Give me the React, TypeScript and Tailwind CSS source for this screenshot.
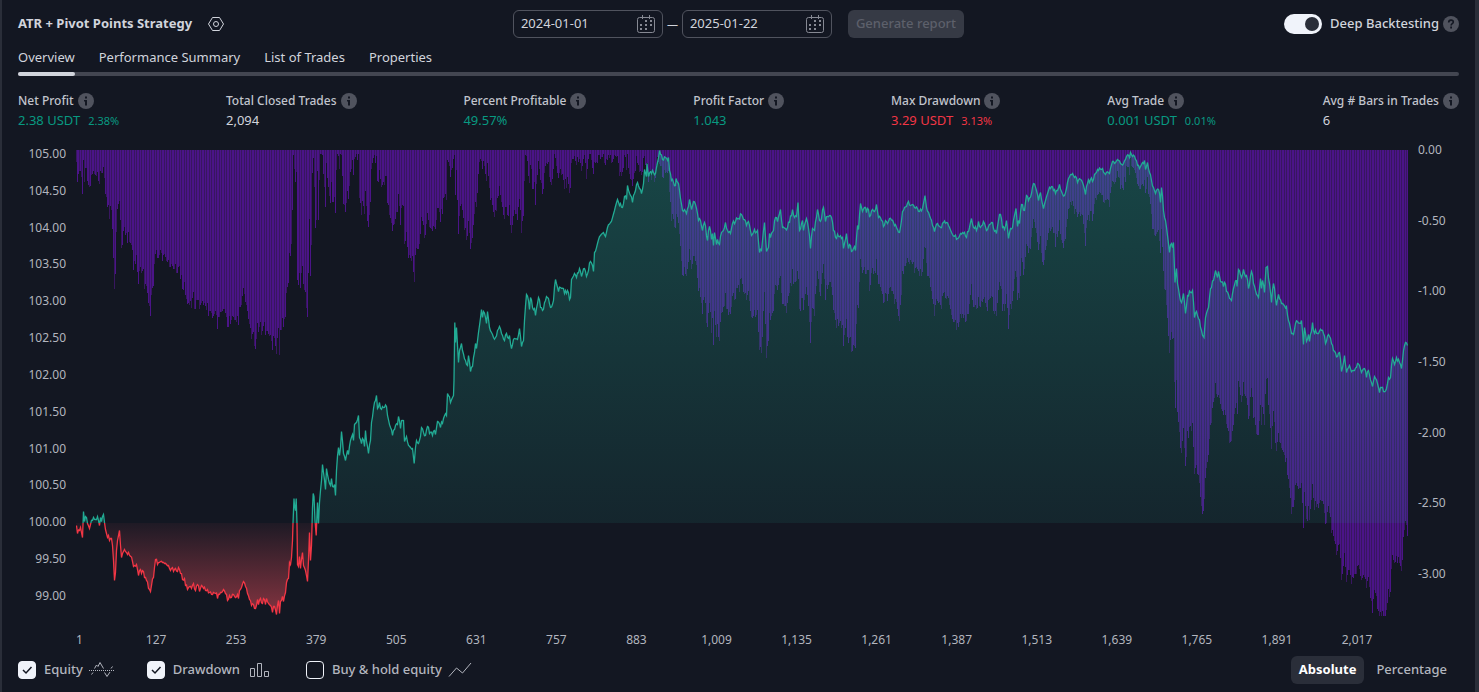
import {useState} from "react";
import type {ReactNode} from "react";

const PLOT = {x: 76, y: 150, w: 1332, h: 466};
const BASELINE = 523;

// equity curve, x,y in plot units
const EQUITY = `
76,525 77,533 79,530 80,527 81,532 82,537 83,511 84,521 85,516 86,517 87,523 89,528 90,524 92,520 93,517 95,519
97,516 98,520 99,525 100,517 101,521 102,516 103,514 104,522 106,533 107,537 108,535 109,540 110,538 111,538
112,545 113,560 114,580 115,572 116,550 117,540 119,530 120,545 121,557 122,553 123,551 124,549 126,552 127,554
128,552 130,556 132,561 133,566 134,565 136,564 137,569 138,575 140,569 141,573 143,571 144,577 146,580 148,588
150,591 151,585 153,577 154,567 155,559 157,564 158,562 160,561 162,562 164,563 166,564 168,565 170,570 171,568
173,571 175,568 177,571 179,569 181,573 182,579 184,578 185,585 187,589 189,586 191,588 193,583 195,590 197,584
199,591 201,585 203,588 205,590 207,589 209,592 211,594 213,592 215,593 217,598 219,594 221,592 223,589 225,593
227,600 229,595 231,597 233,594 235,597 237,594 238,598 239,590 241,587 243,581 245,586 247,593 249,599 251,605
253,604 255,608 257,599 258,604 260,598 262,603 264,599 265,604 266,598 268,603 270,605 272,612 273,606 274,606
276,614 278,600 279,613 280,601 282,596 283,601 285,592 286,582 288,578 289,562 290,564 291,557 292,540 292.5,523
293.5,498 294,505 295,510 295.7,498 296.5,523 297,564 298,566 299,556 300,568 302,552 303,565 305,570 306,575
307,581 308,560 309,532 310,560 311,545 312,507 312.7,493 313.5,496 314.5,520 315.7,535 317,502 318,523 319,502
320,490 321,480 322,464 323,472 325,489 326,468 328,479 330,485 331,478 332,486 334,484 335,495 336,470 338,447
339,455 340,447 341,431 343,453 345,460 347,450 348,454 350,440 352,434 353,440 354,424 356,422 358,415 359,437
361,443 362,438 364,446 365,430 366,441 367,446 368,453 370,440 371,422 373,408 374,402 376,395 377,408 379,402
380,408 382,406 384,407 386,406 387,415 390,427 392,435 395,425 397,424 398,416 400,428 401,420 403,420 404,441
406,436 408,445 410,447 412,448 413.7,463 415,447 416,440 418,443 420,436 421,427 423,432 425,435 427,426 429,433
432,435 434,430 435,434 437,421 440,427 443,418 446,415 447,393 450,402 452,397 453,395 453.5,380 454.3,322
455,342 456,327 457,345 458,362 459,350 461,343 462,350 465,360 467,365 468,355 470,371 472,366 474,352 475,343
476,348 478,332 479,325 481,309 482,317 483,311 486,323 487,311 489,327 491,332 493,337 495,337 497,330 499,326
501,333 504,340 506,333 507,337 509,335 511,348 514,338 517,339 519,328 521,346 523,340 524,320 526,294 528,300
529,309 530,297 532,307 534,308 535,315 538,297 540,307 542,310 545,300 546,296 548,298 550,307 553,300 555,279
558,291 560,287 563,288 564,293 567,290 569,299 570,297 571,279 574,273 576,277 579,268 581,276 584,268 586,276
588,270 590,261 592,265 593,271 594,252 597,243 600,235 603,232 605,236 607,227 610,222 614,210 617,199 619,205
620,203 622,207 624,196 626,199 627,185 630,195 632,202 635,190 637,182 639,188 641,193 643,183 644,169 646,176
646.5,163 648,176 650,171 653,172 655,173 657,162 659,150 662,159 665,157 667,160 668,157 669,170 671,180 675,185
675.5,178 678,183 680,198 682,210 684,209 686,213 688,206 689,199 691,209 693,201 696,208 698,220 700,220 702,230
704,222 707,240 709,226 711,239 712,233 713,245 714,232 716,244 717,239 719,244 721,232 723,230 725,222 727,230
730,233 732,223 735,221 738,218 741,214 744,219 746,225 748,221 751,235 753,232 757,230 759,252 761,250 762,240
764,222 766,251 768,247 769,233 770,237 773,230 775,217 777,221 780,209 782,227 785,228 787,227 789,222 792,209
794,217 796,216 797.5,202 799,230 802,220 803,230 806,218 808,228 810,248 812,228 814,230 817,209 819,220 821,218
823,207 825,221 827,216 831,217 833,230 835,237 838,236 842,237 843,248 846,233 848,248 850,245 851,251 854,246
855,250 857,225 858,229 860,203 862,211 865,207 866,212 868,209 869,216 872,209 874,211 876,204 878,217 881,220
883,226 885,220 887,223 889,218 893,222 896,227 899,232 901,220 902,211 904,207 906,206 908,201 910,205 912,204
914,207 918,211 922,208 924.5,195 926,207 929,215 932,225 934,231 937,223 940,227 943,222 946,222 948,225 952,234
957,238 960,233 963,233 966,237 969,227 971,218 973,227 976,230 978,221 980,227 983,221 986,230 988,226 991,222
993,228 996,233 998,220 1000,214 1002,227 1004,229 1006,220 1008,238 1010,228 1012,227 1014,215 1015.5,208
1017,226 1018,220 1019,223 1021,204 1024,210 1026,195 1028,200 1031,193 1033,183 1036,190 1038,200 1040,192
1043,208 1045,200 1048,190 1051,186 1053,190 1055,193 1059,184 1061,191 1064,195 1066,188 1068,178 1070,174
1072,173 1074,177 1077,182 1080,179 1082,182 1085,194 1087,183 1090,179 1092,181 1095,173 1098,170 1102,168
1105,174 1109,173 1113,161 1115,162 1117,159 1120,163 1123,163 1125,159 1126,156 1129,157 1130,152 1132,156
1135,159 1137,165 1139,168 1142,162 1144,160 1145,169 1147,162 1149,172 1151,180 1153,187 1155,193 1158,189
1160,202 1161,187 1163,210 1165,220 1167,235 1169,252 1171,243 1172,247 1173,242 1174.5,282 1176,268 1177,283
1179,295 1181,302 1183,293 1185,313 1187,295 1190,292 1192,290 1194,317 1196,311 1198,318 1201,330 1203.5,337
1205,317 1208,307 1210,288 1213,280 1215,270 1217,277 1218,271 1220,281 1223,286 1224,282 1226,291 1228,294
1231,300 1233,288 1236,280 1236.5,286 1238,269 1241,277 1243,269 1245,276 1246,275 1248,288 1251,271 1253,283
1255,290 1258,297 1260,278 1261,288 1262,280 1264,292 1265.5,267 1267,266 1268,278 1269,283 1271,302 1273,283
1276,305 1278,294 1281,303 1286,306 1288,320 1291,333 1293,334 1295,323 1297,321 1300,323 1301,320 1303,344
1304,327 1306,341 1308,334 1309,341 1311,331 1312,322 1313,330 1317,333 1321,330 1323,333 1325,343 1328,334
1331,343 1333,350 1337,356 1339,352 1341,371 1344,355 1346,372 1348,367 1352,370 1354,370 1357,363 1359,365
1361,372 1364,368 1366,377 1368,370 1372,386 1374,376 1377,383 1379,392 1381,387 1383,391 1386,388 1388,377
1390,377 1392,358 1394,364 1396,357 1399,362 1401,368 1403,350 1405,342 1407,345
`.trim().split(/\s+/).map((p) => p.split(",").map(Number));

const noise = (n: number) => Math.abs(Math.sin(n * 12.9898) * 43758.5453) % 1;

function buildLine() {
    const out: string[] = [];
    EQUITY.forEach(([x, y], i) => {
        out.push(`${x + 0.5} ${y + 0.5}`);
        const next = EQUITY[i + 1];
        if (!next) return;
        for (let mx = x + 1; mx <= next[0] - 1; mx++) {
            const my = y + (next[1] - y) * (mx - x) / (next[0] - x) + (noise(mx) - 0.5) * 5;
            out.push(`${mx + 0.5} ${my.toFixed(1)}`);
        }
    });
    return "M" + out.join("L");
}

const linePath = buildLine();
const areaPath = `${linePath}V${BASELINE}H${PLOT.x}Z`;

// one drawdown column per unit, measured down from the highest equity so far
function buildDrawdown() {
    let peak = 521;
    let i = 0;
    let solid = "";
    let faint = "";
    for (let x = PLOT.x; x < PLOT.x + PLOT.w; x++) {
        while (i < EQUITY.length - 2 && EQUITY[i + 1][0] <= x) {
            peak = Math.min(peak, EQUITY[i + 1][1]);
            i++;
        }
        const [x0, y0] = EQUITY[i];
        const [x1, y1] = EQUITY[i + 1];
        const t = Math.min(1, (x - x0) / (x1 - x0));
        const y = y0 + (y1 - y0) * t;
        const n = noise(x);
        const depth = Math.max(0, y - peak) * 1.91 + 4 + n * n * 11;
        const bar = `M${x} ${PLOT.y}h1V${Math.round(PLOT.y + Math.min(depth, PLOT.h))}h-1Z`;
        if (x % 5 === 1 || x % 5 === 4) {
            faint += bar;
        } else {
            solid += bar;
        }
    }
    return {solid, faint};
}

const drawdown = buildDrawdown();

const tabs = ["Overview", "Performance Summary", "List of Trades", "Properties"];

const metrics = [
    {label: "Net Profit", value: "2.38 USDT", percent: "2.38%", color: "text-[#089981]"},
    {label: "Total Closed Trades", value: "2,094", color: "text-[#d1d4dc]"},
    {label: "Percent Profitable", value: "49.57%", color: "text-[#089981]"},
    {label: "Profit Factor", value: "1.043", color: "text-[#089981]"},
    {label: "Max Drawdown", value: "3.29 USDT", percent: "3.13%", color: "text-[#f23645]"},
    {label: "Avg Trade", value: "0.001 USDT", percent: "0.01%", color: "text-[#089981]"},
    {label: "Avg # Bars in Trades", value: "6", color: "text-[#d1d4dc]"},
];

const equityTicks = ["105.00", "104.50", "104.00", "103.50", "103.00", "102.50", "102.00", "101.50", "101.00", "100.50", "100.00", "99.50", "99.00"];
const drawdownTicks = ["0.00", "-0.50", "-1.00", "-1.50", "-2.00", "-2.50", "-3.00"];
const tradeTicks = ["1", "127", "253", "379", "505", "631", "757", "883", "1,009", "1,135", "1,261", "1,387", "1,513", "1,639", "1,765", "1,891", "2,017"];

function InfoIcon() {
    return (
        <svg width="16" height="16" viewBox="0 0 16 16" aria-hidden="true">
            <circle cx="8" cy="8" r="8" fill="#50535e"/>
            <path d="M7 3.5h2v2H7zM6 7h3v5.5H7V8.5H6z" fill="#131722"/>
        </svg>
    );
}

function HelpIcon() {
    return (
        <svg width="16" height="16" viewBox="0 0 16 16" aria-hidden="true">
            <circle cx="8" cy="8" r="8" fill="#50535e"/>
            <path d="M5.7 6.4c0-1.4 1-2.3 2.3-2.3s2.3.8 2.3 2c0 1.6-2.2 1.6-2.2 3.4" fill="none" stroke="#131722" strokeWidth="1.6"/>
            <path d="M7.2 10.6h1.8v1.8H7.2z" fill="#131722"/>
        </svg>
    );
}

function CalendarIcon() {
    return (
        <svg width="18" height="18" viewBox="0 0 18 18" aria-hidden="true">
            <path d="M2.5 2.5h13a2 2 0 0 1 2 2v11a2 2 0 0 1-2 2h-13a2 2 0 0 1-2-2v-11a2 2 0 0 1 2-2zM5.5 0v4M12.5 0v4" fill="none" stroke="#868993"/>
            <path d="M8 5h2v2H8zM13 5h2v2h-2zM3 9h2v2H3zM8 9h2v2H8zM13 9h2v2h-2zM3 13h2v2H3zM8 13h2v2H8z" fill="#868993"/>
        </svg>
    );
}

function EquityIcon() {
    return (
        <svg width="26" height="16" viewBox="0 0 26 16" aria-hidden="true" fill="none" stroke="#b2b5be">
            <path d="M0 8.5h26" strokeDasharray="1 1"/>
            <path d="M5.5 6.5L7.5 3l1.5 1.5L11 .5 14.5 6.5M15.5 10.5l2.5 4 3-4.5M2.5 12.5l1.5-2M22 6.5l1.5-2"/>
        </svg>
    );
}

function DrawdownIcon() {
    return (
        <svg width="28" height="15" viewBox="-4 0 28 15" aria-hidden="true" fill="none" stroke="#b2b5be">
            <path d="M.5 5.5h4v8h-4zM7.5 .5h4v13h-4zM14.5 8.5h4v5h-4z"/>
        </svg>
    );
}

function HoldIcon() {
    return (
        <svg width="24" height="16" viewBox="0 0 24 16" aria-hidden="true" fill="none" stroke="#b2b5be">
            <path d="M1 14.5L8.5 6l6 5L23 1"/>
        </svg>
    );
}

function DateField({label, value}: { label: string; value: string }) {
    return (
        <div className="flex h-7 w-[150px] items-center rounded-md border border-[#50535e] px-[7px]">
            <input type="text" aria-label={label} defaultValue={value}
                   className="w-full min-w-0 bg-transparent text-[13px] text-[#d1d4dc] outline-none"/>
            <button type="button" aria-label={`Open ${label}`} className="shrink-0">
                <CalendarIcon/>
            </button>
        </div>
    );
}

function SeriesToggle({label, defaultChecked, icon}: { label: string; defaultChecked?: boolean; icon: ReactNode }) {
    return (
        <label className="flex items-center gap-[6px] text-[13px] font-medium text-[#b2b5be]">
            <span className="mr-[2px] grid">
                <input type="checkbox" defaultChecked={defaultChecked}
                       className="peer col-start-1 row-start-1 h-[18px] w-[18px] appearance-none rounded border border-[#f0f3fa] checked:bg-[#f0f3fa]"/>
                <svg width="18" height="18" viewBox="0 0 18 18" aria-hidden="true"
                     className="invisible col-start-1 row-start-1 peer-checked:visible">
                    <path d="M5 9l3 3 5.5-6" fill="none" stroke="#131722" strokeWidth="1.5"/>
                </svg>
            </span>
            {label}
            {icon}
        </label>
    );
}

function Chart() {
    return (
        <div className="mt-[7px] flex flex-1 flex-col px-4 text-xs text-[#b2b5be]">
            <div className="flex flex-1">
                <div className="flex w-[58px] flex-col justify-between pt-2 pr-[10px] pb-3 text-right">
                    {equityTicks.map((tick) => <span key={tick} className="leading-4">{tick}</span>)}
                </div>
                <div className="flex min-w-0 flex-1 flex-col pt-3">
                    <svg viewBox={`${PLOT.x} ${PLOT.y} ${PLOT.w} ${PLOT.h}`} preserveAspectRatio="none"
                         role="img" aria-label="Equity and drawdown" className="h-0 w-full flex-1">
                        <defs>
                            <linearGradient id="gain" gradientUnits="userSpaceOnUse" x1="0" y1="150" x2="0" y2="523">
                                <stop offset="0" stopColor="#22ab94" stopOpacity="0.32"/>
                                <stop offset="1" stopColor="#22ab94" stopOpacity="0.1"/>
                            </linearGradient>
                            <linearGradient id="loss" gradientUnits="userSpaceOnUse" x1="0" y1="523" x2="0" y2="616">
                                <stop offset="0" stopColor="#f7525f" stopOpacity="0.05"/>
                                <stop offset="1" stopColor="#f7525f" stopOpacity="0.5"/>
                            </linearGradient>
                            <clipPath id="above">
                                <rect x="76" y="149" width="1332" height="374"/>
                            </clipPath>
                            <clipPath id="below">
                                <rect x="76" y="523" width="1332" height="93"/>
                            </clipPath>
                        </defs>
                        <g shapeRendering="crispEdges">
                            <path d={drawdown.solid} fill="#4b1488"/>
                            <path d={drawdown.faint} fill="#381660"/>
                        </g>
                        <g clipPath="url(#above)">
                            <path d={areaPath} fill="url(#gain)"/>
                            <path d={linePath} fill="none" stroke="#22ab94" strokeWidth="1.3"/>
                        </g>
                        <g clipPath="url(#below)">
                            <path d={areaPath} fill="url(#loss)"/>
                            <path d={linePath} fill="none" stroke="#f23645" strokeWidth="1.3"/>
                        </g>
                    </svg>
                </div>
                <div className="flex w-[51px] flex-col justify-between pt-1 pb-[34px] pl-[10px]">
                    {drawdownTicks.map((tick) => <span key={tick} className="leading-4">{tick}</span>)}
                </div>
            </div>
            <div className="flex justify-between pt-4 pr-[102px] pb-2 pl-[58px] leading-4">
                {tradeTicks.map((tick) => (
                    <span key={tick} className="flex w-0 justify-center first:justify-start">{tick}</span>
                ))}
            </div>
        </div>
    );
}

export default function App() {
    const [tab, setTab] = useState("Overview");
    const [unit, setUnit] = useState("Absolute");

    return (
        <div className="flex min-h-screen flex-col border-r-4 border-l-2 border-[#2a2e39] bg-[#131722] font-['Noto_Sans','Open_Sans',sans-serif] text-[#d1d4dc]">
            <header className="grid grid-cols-[1fr_auto_1fr] items-center px-4 pt-[10px]">
                <div className="flex items-center gap-4">
                    <h1 className="text-[13px] font-bold">ATR + Pivot Points Strategy</h1>
                    <button type="button" aria-label="Settings">
                        <svg width="16" height="16" viewBox="0 0 16 16" aria-hidden="true" fill="none" stroke="#d1d4dc">
                            <path d="M4.5 1.5h7L15.5 8l-4 6.5h-7L.5 8z"/>
                            <circle cx="8" cy="8" r="2.5"/>
                        </svg>
                    </button>
                </div>
                <div className="flex items-center gap-4">
                    <div className="flex items-center gap-1">
                        <DateField label="Start date" value="2024-01-01"/>
                        <span className="w-[11px] text-center text-[11px] leading-5">—</span>
                        <DateField label="End date" value="2025-01-22"/>
                    </div>
                    <button type="button" disabled className="h-7 rounded-md bg-[#363a45] px-2 text-[13px] font-medium text-[#5d606b]">
                        Generate report
                    </button>
                </div>
                <div className="flex items-center justify-end gap-1">
                    <label className="flex items-center gap-2 text-[13px] font-medium">
                        <input type="checkbox" role="switch" defaultChecked
                               className="h-5 w-[38px] appearance-none rounded-full bg-[#50535e] p-[3px] before:block before:h-[14px] before:w-[14px] before:rounded-full before:bg-[#2a2e39] checked:bg-[#f0f3fa] checked:before:ml-[18px]"/>
                        Deep Backtesting
                    </label>
                    <button type="button" aria-label="Help"><HelpIcon/></button>
                </div>
            </header>

            <nav className="mx-4 mt-2">
                <div role="tablist" className="flex gap-6 text-[13px]">
                    {tabs.map((name) => (
                        <button key={name} type="button" role="tab" aria-selected={tab === name}
                                onClick={() => setTab(name)}
                                className="group pt-[1px] leading-5">
                            {name}
                            <span className="relative z-10 -mb-1 mt-[5px] block h-1 rounded-full group-aria-selected:bg-[#d1d4dc]"/>
                        </button>
                    ))}
                </div>
                <div className="h-1 rounded-full bg-[#434651]"/>
            </nav>

            <dl className="flex justify-between px-4 pt-4">
                {metrics.map((m) => (
                    <div key={m.label}>
                        <dt className="flex items-center gap-1 text-xs leading-[18px] font-medium text-[#c1c4cd]">
                            {m.label}
                            <InfoIcon/>
                        </dt>
                        <dd className={`flex items-baseline gap-2 text-[13px] leading-5 ${m.color}`}>
                            {m.value}
                            {m.percent && <span className="text-[11px] leading-5">{m.percent}</span>}
                        </dd>
                    </div>
                ))}
            </dl>

            <Chart/>

            <footer className="flex items-center justify-between px-4 pb-2">
                <div className="flex items-center gap-8">
                    <SeriesToggle label="Equity" defaultChecked icon={<EquityIcon/>}/>
                    <SeriesToggle label="Drawdown" defaultChecked icon={<DrawdownIcon/>}/>
                    <SeriesToggle label="Buy &amp; hold equity" icon={<HoldIcon/>}/>
                </div>
                <div className="mr-1 flex gap-1 text-[13px] font-medium">
                    {["Absolute", "Percentage"].map((name) => (
                        <button key={name} type="button" aria-pressed={unit === name} onClick={() => setUnit(name)}
                                className="h-7 rounded-md px-2 text-[#b2b5be] aria-pressed:bg-[#2a2e39] aria-pressed:font-bold aria-pressed:text-white">
                            {name}
                        </button>
                    ))}
                </div>
            </footer>
        </div>
    );
}
